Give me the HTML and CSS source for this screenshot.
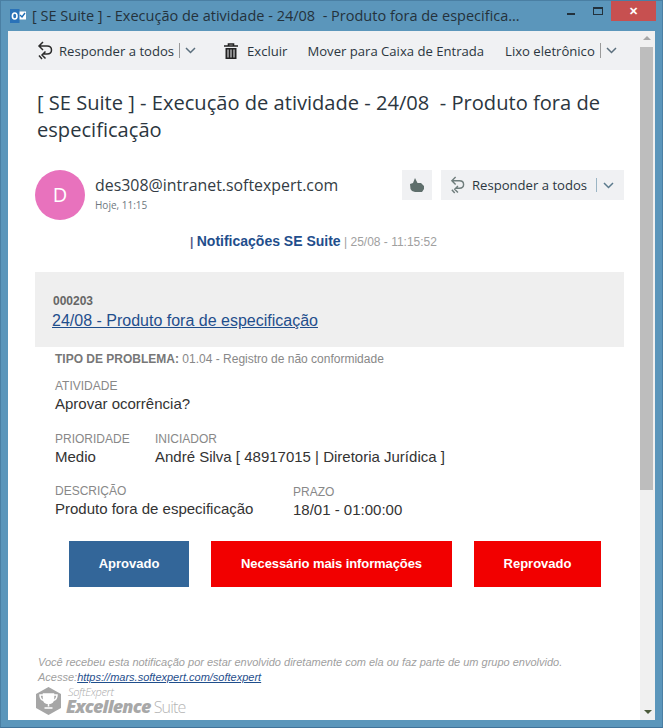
FILE: index.html
```html
<!DOCTYPE html>
<html lang="pt-BR">
<head>
<meta charset="utf-8">
<title>SE Suite</title>
<link rel="stylesheet" href="styles.css">
</head>
<body>
<div class="window">
  <header class="titlebar">
    <svg class="app-icon" width="16" height="14" viewBox="0 0 16 14">
      <rect x="7" y="2.500" width="9" height="8" fill="#ffffff"/>
      <path d="M10 6l2 2 3-4" stroke="#1f6fb5" stroke-width="1.400" fill="none"/>
      <rect x="0" y="0" width="9.500" height="14" fill="#2a72b8"/>
      <ellipse cx="4.700" cy="7" rx="2.300" ry="3" fill="none" stroke="#fff" stroke-width="1.600"/>
    </svg>
    <div class="title-text">[ SE Suite ] - Execução de atividade - 24/08  - Produto fora de especifica...</div>
    <div class="controls">
      <span class="ctl-min"></span>
      <span class="ctl-max"></span>
      <span class="ctl-close">✕</span>
    </div>
  </header>
  <div class="client">
    <div class="main">
      <nav class="toolbar">
        <span class="tool tool-reply">
          <svg class="ico" width="16" height="19" viewBox="0 0 16 19"><path d="M6 1L2 5l4 4M2 5h8c3 0 4.500 2 4.500 4s-1.500 4-4.500 4H6M8.500 10.500L5 14l3.500 3.500M5 18l-3-3.500" fill="none" stroke="#2b2b2b" stroke-width="1.500"/></svg>
          <span>Responder a todos</span><i class="sep"></i>
          <svg class="chev" width="11" height="7" viewBox="0 0 11 7"><path d="M1 1l4.500 4.500L10 1" fill="none" stroke="#5b6f7d" stroke-width="1.500"/></svg>
        </span>
        <span class="tool tool-del">
          <svg class="ico" width="14" height="16" viewBox="0 0 14 16"><path d="M0 3h14M4.500 3V1h5v2" fill="none" stroke="#222" stroke-width="1.600"/><path d="M1.500 5h11v11h-11z" fill="#222"/><path d="M4 6.500v8M7 6.500v8M10 6.500v8" stroke="#f0f1f3" stroke-width="1"/></svg>
          <span>Excluir</span>
        </span>
        <span class="tool tool-move">Mover para Caixa de Entrada</span>
        <span class="tool tool-junk">
          <span>Lixo eletrônico</span><i class="sep"></i>
          <svg class="chev" width="11" height="7" viewBox="0 0 11 7"><path d="M1 1l4.500 4.500L10 1" fill="none" stroke="#5b6f7d" stroke-width="1.500"/></svg>
        </span>
      </nav>
      <main class="content">
        <h1 class="subject">[ SE Suite ] - Execução de atividade - 24/08  - Produto fora de<br>especificação</h1>
        <section class="sender">
          <div class="avatar">D</div>
          <div class="sender-info">
            <div class="sender-mail">des308@intranet.softexpert.com</div>
            <div class="sender-time">Hoje, 11:15</div>
          </div>
          <button class="btn-like" type="button">
            <svg width="14" height="15" viewBox="0 0 14 15"><path d="M0 6l3-1 2-5 1.500 3 1 2H11l3 3v3l-2 3H5l-3-1-1.500-2z" fill="#5f6f6c"/></svg>
          </button>
          <button class="btn-reply" type="button">
            <svg width="15" height="18" viewBox="0 0 16 19"><path d="M6 1L2 5l4 4M2 5h8c3 0 4.500 2 4.500 4s-1.500 4-4.500 4H6M8.500 10.500L5 14l3.500 3.500M5 18l-3-3.500" fill="none" stroke="#6f7d7c" stroke-width="1.500"/></svg>
            <span>Responder a todos</span><i class="sep sep-light"></i>
            <svg class="chev" width="11" height="7" viewBox="0 0 11 7"><path d="M1 1l4.500 4.500L10 1" fill="none" stroke="#5b7a8c" stroke-width="1.500"/></svg>
          </button>
        </section>
        <div class="notif"><span class="notif-bar">|</span> <strong>Notificações SE Suite</strong> <span class="notif-date">| 25/08 - 11:15:52</span></div>
        <section class="card">
          <div class="card-id">000203</div>
          <a class="card-link" href="#">24/08 - Produto fora de especificação</a>
        </section>
        <section class="details">
          <p class="problem"><b>TIPO DE PROBLEMA:</b> 01.04 - Registro de não conformidade</p>
          <div class="field f-atividade">
            <div class="label">ATIVIDADE</div>
            <div class="value">Aprovar ocorrência?</div>
          </div>
          <div class="row r-a">
            <div class="field w-prio">
              <div class="label">PRIORIDADE</div>
              <div class="value">Medio</div>
            </div>
            <div class="field">
              <div class="label">INICIADOR</div>
              <div class="value">André Silva [ 48917015 | Diretoria Jurídica ]</div>
            </div>
          </div>
          <div class="row r-b">
            <div class="field w-desc">
              <div class="label">DESCRIÇÃO</div>
              <div class="value">Produto fora de especificação</div>
            </div>
            <div class="field f-prazo">
              <div class="label">PRAZO</div>
              <div class="value">18/01 - 01:00:00</div>
            </div>
          </div>
        </section>
        <section class="actions">
          <a class="act act-blue" href="#">Aprovado</a>
          <a class="act act-red act-wide" href="#">Necessário mais informações</a>
          <a class="act act-red act-rej" href="#">Reprovado</a>
        </section>
        <footer class="foot">
          <p>Você recebeu esta notificação por estar envolvido diretamente com ela ou faz parte de um grupo envolvido.</p>
          <p>Acesse:<a href="#">https://mars.softexpert.com/softexpert</a></p>
          <div class="brand">
            <svg width="27" height="28" viewBox="0 0 27 28">
              <path d="M13.500 0L26 7v14l-12.500 7L1 21V7z" fill="#a6a6a6"/>
              <path d="M8.500 7h10v4c0 3.500-2 5.500-5 5.500s-5-2-5-5.500zM13.500 16v3.500M9.500 21h8" fill="#fff" stroke="#fff" stroke-width="1.500"/>
              <path d="M8.500 8H5c0 3.500 1.500 5 4 5.500M18.500 8H22c0 3.500-1.500 5-4 5.500" fill="none" stroke="#fff" stroke-width="1.500"/>
            </svg>
            <div class="brand-text">
              <div class="brand-top">SoftExpert</div>
              <div class="brand-main"><b>Excellence</b><span>Suite</span></div>
            </div>
          </div>
        </footer>
      </main>
    </div>
    <aside class="scrollbar">
      <span class="arrow-up"></span>
      <span class="thumb"></span>
      <span class="arrow-down"></span>
    </aside>
  </div>
</div>
</body>
</html>
```
FILE: styles.css
```css
* { box-sizing: border-box; }
html, body { margin: 0; padding: 0; }
body { width: 663px; height: 728px; overflow: hidden; font-family: "Liberation Sans", Arial, sans-serif; }

.window {
  width: 663px; height: 728px;
  background: #5b96bb;
  border: 1px solid #4a7fa3;
  border-bottom-color: #41739a;
  display: flex; flex-direction: column;
  padding: 0 7px 7px;
}

.titlebar { height: 30px; display: flex; align-items: center; flex: none; position: relative; }
.app-icon { margin: 0 6px 0 2px; flex: none; }
.title-text {
  font: 14.5px/20px "Open Sans", sans-serif;
  color: #24323c; white-space: pre;
}
.controls { margin-left: auto; display: flex; align-items: flex-start; height: 30px; }
.ctl-min { width: 8px; height: 2px; background: #22313c; margin: 12px 18px 0 0; }
.ctl-max { width: 10px; height: 8px; border: 1px solid #22313c; border-top-width: 2px; margin: 6px 8px 0 0; }
.ctl-close { width: 45px; height: 20px; background: #c75050; color: #fff; font-size: 11px; line-height: 20px; text-align: center; margin-right: -1px; font-weight: bold; }

.client { flex: 1; min-height: 0; display: flex; background: #fff; }
.main { flex: 1; min-width: 0; display: flex; flex-direction: column; }

.toolbar {
  height: 39px; background: #f0f1f3; flex: none;
  display: flex; align-items: center;
  font: 13.1px/18px "Open Sans", sans-serif; color: #2b3640;
}
.tool { display: flex; align-items: center; white-space: nowrap; }
.tool-reply { margin-left: 29px; }
.tool-reply .ico { margin-right: 6px; }
.tool-del { margin-left: 28px; }
.tool-del .ico { margin-right: 9px; }
.tool-move { margin-left: 20px; }
.tool-junk { margin-left: 21px; }
.sep { width: 1px; height: 15px; background: #9a9a9a; margin: 0 5px 0 5px; display: block; }
.sep-light { background: #9bb5c4; margin: 0 6px 0 9px; height: 14px; }
.chev { display: block; }

.content { flex: 1; min-height: 0; padding: 0 16px 0 27px; }

.subject {
  margin: 19px 0 0 2px;
  font: 400 20.1px/27px "Open Sans", sans-serif;
  color: #2b3640; white-space: pre;
}

.sender { display: flex; align-items: flex-start; margin-top: 27px; }
.avatar {
  width: 50px; height: 50px; border-radius: 50%;
  background: #e872bd; color: #fff;
  font: 20px/50px "Open Sans", sans-serif; text-align: center; flex: none;
}
.sender-info { margin-left: 10px; flex: 1; }
.sender-mail { font: 15.9px/22px "Open Sans", sans-serif; color: #333c44; margin-top: 4px; }
.sender-time { font: 10px/14px "Open Sans", sans-serif; color: #6e7780; margin-top: 2px; }
.btn-like, .btn-reply {
  border: 0; padding: 0; height: 30px; background: #f0f1f3;
  display: flex; align-items: center; justify-content: center;
}
.btn-like { width: 30px; margin-right: 9px; }
.btn-reply {
  width: 183px; font: 13.1px/18px "Open Sans", sans-serif; color: #2b3640;
  justify-content: flex-start; padding-left: 9px;
}
.btn-reply span { margin-left: 7px; }

.notif { margin-top: 13px; height: 16px; font-size: 12px; line-height: 16px; text-align: center; color: #777; padding-right: 32px; }
.notif-bar { color: #5a5a8a; font-weight: bold; }
.notif strong { color: #1f4e8c; font-size: 14px; }
.notif-date { color: #a0a0a0; }

.card { margin-top: 23px; height: 75px; background: #efefef; padding: 22px 18px 0 17px; }
.card-id { font-size: 12px; line-height: 14px; font-weight: bold; color: #666; margin-left: 1px; }
.card-link { display: block; font-size: 16px; line-height: 20px; color: #1f4e8c; margin-top: 3px; }

.details { padding-left: 20px; }
.problem { margin: 4px 0 0; font-size: 12px; line-height: 16px; color: #888; }
.problem b { color: #777; }
.label { font-size: 12px; line-height: 15px; color: #888; }
.value { font-size: 15px; line-height: 17px; color: #333; margin-top: 1px; }
.f-atividade { margin-top: 12px; }
.row { display: flex; }
.r-a { margin-top: 20px; }
.r-b { margin-top: 19px; }
.w-prio { width: 100px; }
.w-desc { width: 238px; }
.f-prazo { margin-top: 1px; }

.actions { margin-top: 23px; display: flex; padding-left: 34px; }
.act {
  height: 46px; display: flex; align-items: center; justify-content: center;
  padding-bottom: 2px;
  color: #fff; font-size: 13px; font-weight: bold; text-decoration: none;
}
.act-blue { width: 120px; background: #336699; }
.act-red { background: #f20000; }
.act-wide { width: 241px; margin-left: 22px; letter-spacing: -0.1px; }
.act-rej { width: 127px; margin-left: 22px; }

.foot { margin-top: 68px; padding-left: 3px; font-size: 11px; line-height: 15px; font-style: italic; color: #a0a0a0; }
.foot p { margin: 0; }
.foot a { color: #1f4e8c; }
.brand { display: flex; align-items: center; font-style: normal; margin: 1px 0 0 -3px; color: #a8a8a8; }
.brand-text { margin-left: 4px; }
.brand-top { font: italic 300 11px/12px "Open Sans", sans-serif; margin-left: 2px; color: #aaa; letter-spacing: -0.3px; }
.brand-main { font: 18px/16px "Open Sans", sans-serif; letter-spacing: -0.8px; white-space: nowrap; }
.brand-main b { font-weight: 800; font-style: italic; color: #a8a8a8; }
.brand-main span { font-weight: 300; margin-left: 3px; color: #b5b5b5; font-size: 16px; }

.scrollbar { width: 15px; flex: none; background: #f0f0f0; display: flex; flex-direction: column; align-items: flex-start; }
.arrow-up { width: 0; height: 0; margin: 5px 0 0 3px; border: 4px solid transparent; border-top: 0; border-bottom: 4px solid #a6a6a6; }
.thumb { width: 13px; height: 443px; background: #bdbdbd; margin-top: 7px; }
.arrow-down { width: 0; height: 0; margin: auto 0 6px 4px; border: 4px solid transparent; border-bottom: 0; border-top: 4px solid #4b5a3a; }
```
